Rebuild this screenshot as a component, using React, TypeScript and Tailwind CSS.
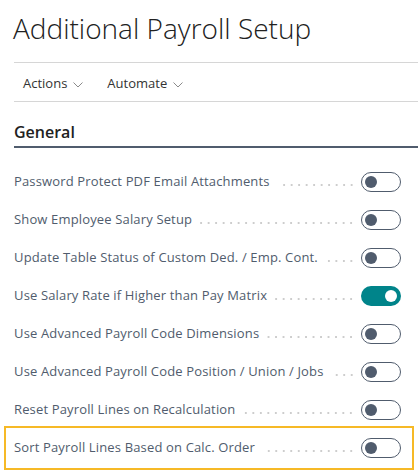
import React from "react";

const rows: { label: string; on: boolean; focused?: boolean }[] = [
  { label: "Password Protect PDF Email Attachments", on: false },
  { label: "Show Employee Salary Setup", on: false },
  { label: "Update Table Status of Custom Ded. / Emp. Cont.", on: false },
  { label: "Use Salary Rate if Higher than Pay Matrix", on: true },
  { label: "Use Advanced Payroll Code Dimensions", on: false },
  { label: "Use Advanced Payroll Code Position / Union / Jobs", on: false },
  { label: "Reset Payroll Lines on Recalculation", on: false },
  { label: "Sort Payroll Lines Based on Calc. Order", on: false, focused: true },
];

function Chevron() {
  return (
    <svg width="10" height="6" viewBox="0 0 10 6" className="ml-[6px] mt-[2px]">
      <path d="M0.5 0.5 L5 5 L9.5 0.5" fill="none" stroke="#8a8a8a" strokeWidth="1" />
    </svg>
  );
}

function Toggle({ on }: { on: boolean }) {
  if (on) {
    return (
      <div className="w-[40px] h-[20px] rounded-full bg-[#00848a] flex items-center justify-end pr-[4px] shrink-0">
        <div className="w-[12px] h-[12px] rounded-full bg-white" />
      </div>
    );
  }
  return (
    <div className="w-[40px] h-[20px] rounded-full border border-[#505c6d] flex items-center pl-[3px] shrink-0">
      <div className="w-[12px] h-[12px] rounded-full bg-[#505c6d]" />
    </div>
  );
}

export default function App() {
  return (
    <div
      className="w-[418px] h-[472px] bg-white overflow-hidden"
      style={{ fontFamily: '"Open Sans", "Noto Sans", sans-serif' }}
    >
      {/* Title */}
      <div className="pl-[13px] pt-[10px] h-[62px]">
        <h1 className="text-[28px] leading-[36px] font-light text-[#212121]">
          Additional Payroll Setup
        </h1>
      </div>

      {/* Action bar */}
      <div className="ml-[14px] border-t border-b border-[#d6d6d6] h-[40px] flex items-center pl-[9px] pt-[3px] gap-[24px] text-[13px] text-[#333]">
        <div className="flex items-center">
          Actions
          <Chevron />
        </div>
        <div className="flex items-center">
          Automate
          <Chevron />
        </div>
      </div>

      {/* Section header */}
      <div className="ml-[14px] pt-[19px] border-b-2 border-[#505c6d] h-[46px]">
        <h2 className="text-[16px] leading-[22px] font-semibold text-[#212121]">General</h2>
      </div>

      {/* Fields */}
      <div className="pt-[15px] px-[4px]">
        {rows.map((r) => (
          <div
            key={r.label}
            className={
              "h-[38px] flex items-center pl-[8px] pr-[11px] border-2 " +
              (r.focused ? "border-[#f6b926] h-[44px] -mt-[3px]" : "border-transparent")
            }
          >
            <span className="text-[13px] text-[#505c6d] whitespace-nowrap tracking-[0.15px]">{r.label}</span>
            <div className="flex-1 ml-[8px] mr-[6px] h-[4px] translate-y-[3px] bg-[radial-gradient(circle,#cdcdcd_1px,transparent_1.3px)] bg-[length:7.5px_4px] bg-repeat-x bg-right" />
            <Toggle on={r.on} />
          </div>
        ))}
      </div>
    </div>
  );
}
